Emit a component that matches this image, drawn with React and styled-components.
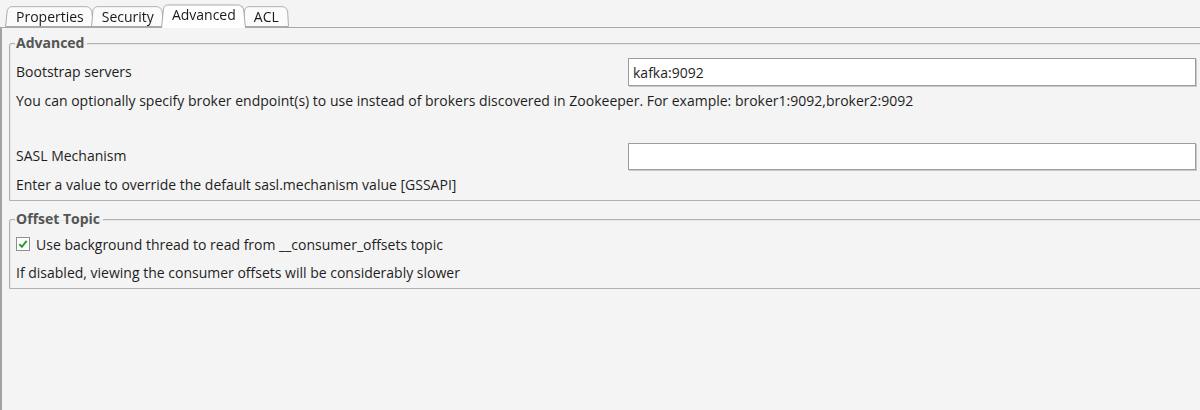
import React, { useState } from 'react';
import styled, { createGlobalStyle } from 'styled-components';

const GlobalStyle = createGlobalStyle`
  html, body {
    margin: 0;
    padding: 0;
    background: #f4f4f4;
    overflow: hidden;
  }
  body {
    font-family: 'Open Sans', 'Noto Sans', sans-serif;
    font-size: 14px;
    color: #1e1e1e;
  }
`;

const Page = styled.div`
  width: 1200px;
  height: 410px;
  background: #f4f4f4;
`;

const TabStrip = styled.div`
  display: flex;
  align-items: flex-end;
  height: 27px;
  padding-left: 5px;
  border-bottom: 1px solid #a9a9a9;
`;

const Tab = styled.div`
  position: relative;
  height: ${p => (p.active ? '25px' : '22px')};
  margin-bottom: ${p => (p.active ? '-1px' : '0')};
  margin-right: -3px;
  padding: 0 10px 0 11px;
  display: flex;
  align-items: center;
  font-size: 14px;
  color: #1a1a1a;
  cursor: default;
  z-index: ${p => (p.active ? 2 : 1)};
  span {
    position: relative;
    top: ${p => (p.active ? '-1px' : '0')};
  }
  &::before {
    content: '';
    position: absolute;
    inset: 0 0 0 0;
    z-index: -1;
    background: ${p => (p.active ? '#fefefe' : '#fbfbfb')};
    border: 1px solid #a9a9a9;
    border-bottom: ${p => (p.active ? 'none' : '1px solid #a9a9a9')};
    border-radius: 5px 6px 0 0;
    transform: perspective(50px) rotateX(7deg);
    transform-origin: bottom;
  }
`;

const Body = styled.div`
  border-left: 2px solid #a3a3a3;
  height: 382px;
  padding: 8px 0 0 7px;
  margin-right: -20px;
`;

const Group = styled.fieldset`
  margin: 0 0 11px 0;
  padding: 0 23px 5px 5px;
  border: 1px solid #b0b0b0;
  box-shadow: inset 1px 1px 0 #e6e6e6;
  border-radius: 2px 0 0 0;
  min-width: 0;
`;

const Legend = styled.legend`
  padding: 0 3px 0 1px;
  margin-left: 0;
  font-weight: 700;
  font-size: 14px;
  color: #555;
  line-height: 14px;
`;

const FieldRow = styled.div`
  display: flex;
  align-items: center;
  justify-content: space-between;
  margin-top: ${p => p.top || 0}px;
  height: 28px;
`;

const Label = styled.label`
  line-height: 20px;
  margin-left: 1px;
`;

const TextInput = styled.input`
  box-sizing: border-box;
  width: 568px;
  height: ${p => p.h || 28}px;
  margin: 0;
  padding: 0 4px;
  border: 1px solid #9c9c9c;
  box-shadow: 1px 1px 0 #c9c9c9;
  background: #fff;
  font-family: inherit;
  font-size: 14px;
  color: #1e1e1e;
  outline: none;
`;

const Hint = styled.p`
  margin: ${p => p.gap || 5}px 0 0 1px;
  line-height: 20px;
`;

const Spacer = styled.div`
  height: 31px;
`;

const CheckRow = styled.label`
  display: flex;
  align-items: center;
  gap: 6px;
  margin-top: 8px;
  height: 20px;
  cursor: default;
`;

const Box = styled.span`
  box-sizing: border-box;
  width: 14px;
  height: 14px;
  margin-left: 1px;
  border: 1px solid #8f8f8f;
  background: #fff;
  display: flex;
  align-items: center;
  justify-content: center;
`;

function Check({ checked, onToggle }) {
  return (
    <Box onClick={onToggle}>
      {checked && (
        <svg width="10" height="10" viewBox="0 0 10 10">
          <path d="M1.3 5.2 L3.9 7.8 L8.7 1.8" fill="none" stroke="#2f9c2f" strokeWidth="2" />
        </svg>
      )}
    </Box>
  );
}

const tabs = ['Properties', 'Security', 'Advanced', 'ACL'];

export default function App() {
  const [active, setActive] = useState('Advanced');
  const [bootstrap, setBootstrap] = useState('kafka:9092');
  const [sasl, setSasl] = useState('');
  const [useThread, setUseThread] = useState(true);

  return (
    <Page>
      <GlobalStyle />
      <TabStrip>
        {tabs.map(t => (
          <Tab key={t} active={t === active} onClick={() => setActive(t)}>
            <span>{t}</span>
          </Tab>
        ))}
      </TabStrip>
      <Body>
        <Group>
          <Legend>Advanced</Legend>
          <FieldRow top={8}>
            <Label>Bootstrap servers</Label>
            <TextInput value={bootstrap} onChange={e => setBootstrap(e.target.value)} />
          </FieldRow>
          <Hint>
            You can optionally specify broker endpoint(s) to use instead of brokers discovered in
            Zookeeper. For example: broker1:9092,broker2:9092
          </Hint>
          <Spacer />
          <FieldRow>
            <Label>SASL Mechanism</Label>
            <TextInput h={27} value={sasl} onChange={e => setSasl(e.target.value)} />
          </FieldRow>
          <Hint>Enter a value to override the default sasl.mechanism value [GSSAPI]</Hint>
        </Group>
        <Group>
          <Legend>Offset Topic</Legend>
          <CheckRow>
            <Check checked={useThread} onToggle={() => setUseThread(!useThread)} />
            Use background thread to read from __consumer_offsets topic
          </CheckRow>
          <Hint gap={9}>If disabled, viewing the consumer offsets will be considerably slower</Hint>
        </Group>
      </Body>
    </Page>
  );
}
